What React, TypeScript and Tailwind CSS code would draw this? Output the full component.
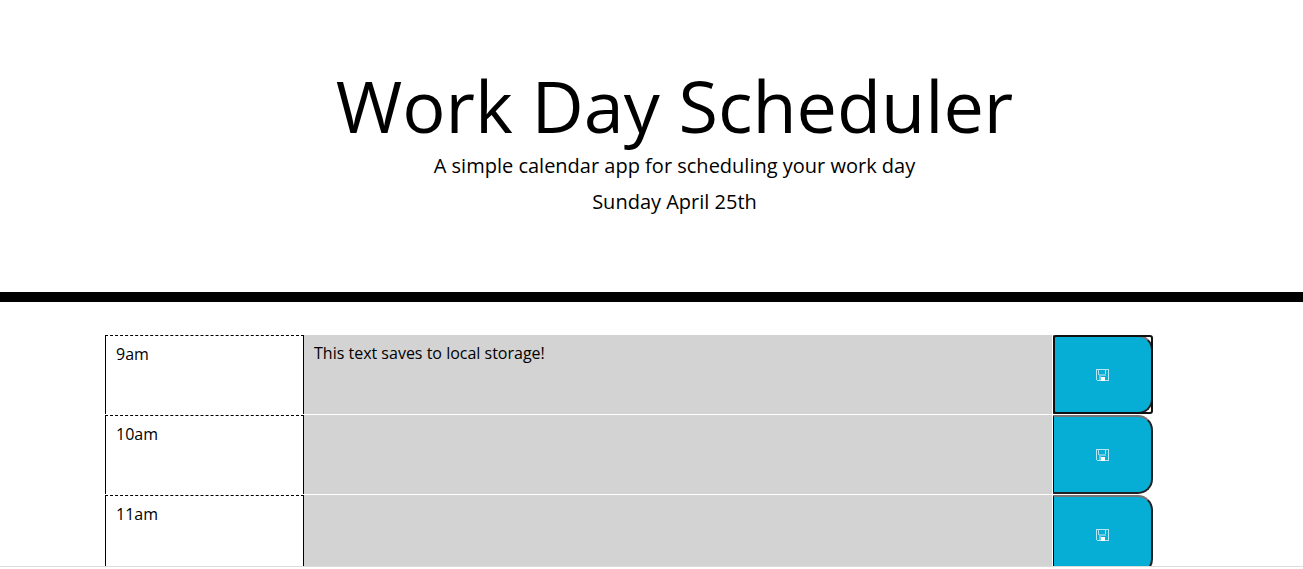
type Slot = { hour: string; text: string; focused?: boolean };

const slots: Slot[] = [
  { hour: "9am", text: "This text saves to local storage!", focused: true },
  { hour: "10am", text: "" },
  { hour: "11am", text: "" },
];

function SaveIcon() {
  return (
    <svg className="mt-px" width="13" height="12" viewBox="0 0 13 12" fill="none" shapeRendering="crispEdges" aria-hidden="true">
      <path d="M0.5 0.5H12.5V11.5H1.5L0.5 10.5Z" stroke="#b5e6f3" />
      <path d="M2.5 1V5.5M9.5 1V5.5" stroke="#a2dff0" />
      <path d="M3 5H10V7H3Z" fill="#6fcbe5" />
      <path d="M3 7H5V11H3Z" fill="#6fcbe5" />
      <path d="M5 8H9V12H5Z" fill="#fff" />
    </svg>
  );
}

function TimeBlock({ hour, text, focused }: Slot) {
  return (
    <div className="flex h-20 shrink-0">
      <div className="h-[79px] w-[199px] border-x border-t border-x-black border-t-black [border-top-style:dashed] px-[10px] pt-[6px] text-[16px] leading-6">
        {hour}
      </div>
      <div className="h-[79px] w-[748px] bg-[#d3d3d3] px-[10px] pt-[6px] text-[16px] leading-6">{text}</div>
      <div className="relative ml-px h-[79px] w-[100px]">
        <button
          aria-label={`Save ${hour}`}
          className="flex h-full w-full items-center justify-center rounded-r-[15px] border-2 border-l border-t-[#767676] border-r-[#212121] border-b-[#212121] border-l-black bg-[#06aed5]"
        >
          <SaveIcon />
        </button>
        {focused && <span className="pointer-events-none absolute inset-0 rounded-[3px] border-2 border-[#101010]" />}
      </div>
    </div>
  );
}

export default function App() {
  return (
    <div className="flex h-[569px] flex-col overflow-hidden bg-white font-['Open_Sans',sans-serif] text-black">
      <header className="h-[302px] shrink-0 border-b-[10px] border-black pt-[62px] pl-[46px] text-center">
        <h1 className="text-[72px] leading-[86px] font-normal">Work Day Scheduler</h1>
        <p className="mt-[3px] text-[20px] leading-[30px]">A simple calendar app for scheduling your work day</p>
        <p className="mt-[6px] text-[20px] leading-[30px]">Sunday April 25th</p>
      </header>
      <main className="flex h-[264px] shrink-0 flex-col overflow-hidden pt-[33px] pl-[105px]">
        {slots.map((slot) => (
          <TimeBlock key={slot.hour} {...slot} />
        ))}
      </main>
      <div className="h-px shrink-0 bg-[#dcdcdc]" />
    </div>
  );
}
